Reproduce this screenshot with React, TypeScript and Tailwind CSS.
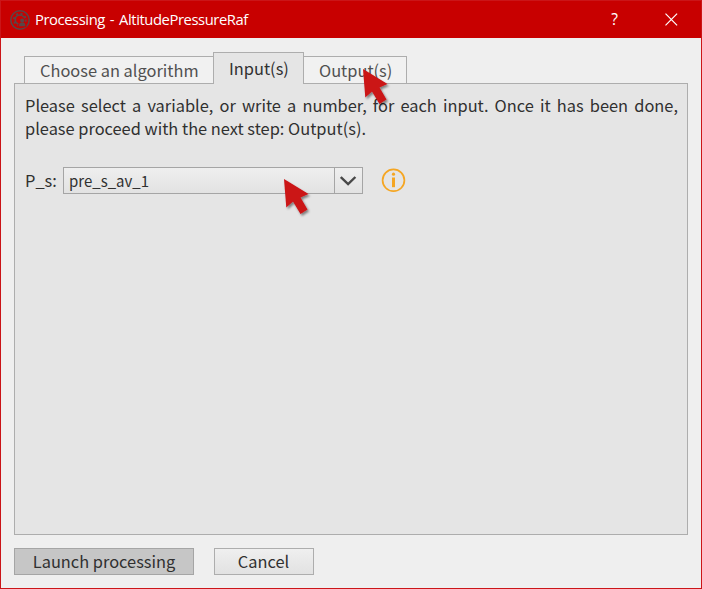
import type { ReactNode } from "react";

function Pointer({ className }: { className: string }) {
  return (
    <svg
      className={`pointer-events-none absolute h-[44px] w-[34px] ${className}`}
      viewBox="0 0 34 44"
    >
      <defs>
        <filter id="pointer-shadow" x="-30%" y="-30%" width="170%" height="170%">
          <feDropShadow dx="1.5" dy="2" stdDeviation="1.3" floodColor="#000" floodOpacity="0.45" />
        </filter>
      </defs>
      <path
        d="M4 4 28.5 19 20.5 22.5 27.5 34.5 20.5 39 13 26.5 6.3 32.5Z"
        fill="#cb1317"
        filter="url(#pointer-shadow)"
      />
    </svg>
  );
}

function AppIcon() {
  return (
    <svg className="size-5 shrink-0" viewBox="0 0 20 20" fill="none" stroke="#594646">
      <circle cx="10" cy="10" r="9.2" strokeWidth="1.5" />
      <circle cx="9.8" cy="9.6" r="4.6" strokeWidth="1.7" />
      <circle cx="9.8" cy="9.6" r="5.9" strokeWidth="1.8" strokeDasharray="2.1 2.534" />
      <path d="M8.2 17.2v-3.4l2-1.8a2.8 2.8 0 1 1 4.2 0l2 1.8v3.4Z" fill="#c80000" stroke="none" />
      <circle cx="12.2" cy="10.6" r="2" fill="#594646" stroke="none" />
      <path d="M9.2 16.3v-2.4l1.5-1.4h3l1.5 1.4v2.4Z" fill="#594646" stroke="none" />
    </svg>
  );
}

function Tab({ className, children }: { className: string; children: ReactNode }) {
  return (
    <button className={`border border-[#adadad] text-left whitespace-nowrap ${className}`}>
      {children}
    </button>
  );
}

export default function App() {
  return (
    <div className="relative flex h-[589px] w-[702px] flex-col overflow-hidden border border-[#cb1518] bg-[#efefef] font-['Noto_Sans_CJK_SC',sans-serif] text-[16.4px] leading-[23px] text-[#303030]">
      <header className="flex h-[37px] shrink-0 items-center bg-[#c80000] pl-[9px] font-['Open_Sans',sans-serif] text-white">
        <AppIcon />
        <span className="ml-[5px] text-[14.8px] tracking-[-0.43px] whitespace-nowrap [word-spacing:1.5px]">
          Processing - AltitudePressureRaf
        </span>
        <span className="mr-[47px] ml-auto text-[15.5px]">?</span>
        <svg className="mr-[23px] size-[13px]" viewBox="0 0 13 13" stroke="white" strokeWidth="1.2">
          <path d="M.5.7 12.1 12.3M12.1.7.5 12.3" />
        </svg>
      </header>

      <main className="flex flex-1 flex-col px-[13px] pt-[14px] pb-[13px]">
        <div className="relative z-10 -mb-px flex h-8 items-end pl-[10px]">
          <Tab className="h-7 w-[190px] bg-[#f1f1f1] pl-[15px] text-[#505050]">
            Choose an algorithm
          </Tab>
          <Tab className="-ml-px h-8 w-[91px] border-b-0 bg-[#e5e5e5] pl-[15px]">Input(s)</Tab>
          <Tab className="-ml-px h-7 w-[104px] bg-[#f1f1f1] pl-[15px] text-[#505050]">
            Output(s)
          </Tab>
        </div>

        <section className="h-[452px] w-[674px] shrink-0 border border-[#adadad] bg-[#e5e5e5] px-[10px] pt-[10px]">
          <p className="w-[653px] text-justify">
            Please select a variable, or write a number, for each input. Once it has been done,
            please proceed with the next step: Output(s).
          </p>
          <div className="mt-[27px] flex h-[27px] items-center">
            <span className="w-[38px]">P_s:</span>
            <div className="flex h-[27px] w-[300px] border border-[#a5a5a5] bg-linear-to-b from-[#efefef] to-[#e2e2e2]">
              <span className="flex flex-1 items-center border-r border-[#a5a5a5] pl-[5px] text-[15px]">
                pre_s_av_1
              </span>
              <span className="flex w-[27px] items-center justify-center pr-px">
                <svg className="h-[10px] w-[17px]" viewBox="0 0 17 10" fill="none">
                  <path d="m.8 1 7.3 7 7.3-7" stroke="#484848" strokeWidth="2.4" />
                </svg>
              </span>
            </div>
            <svg className="ml-[18px] size-[25px]" viewBox="0 0 25 25">
              <circle cx="12.5" cy="12.3" r="10.9" fill="none" stroke="#f5a623" strokeWidth="1.7" />
              <path d="M11 9.5h3v9.7h-3z" fill="#f5a623" />
              <circle cx="12.5" cy="6.2" r="1.6" fill="#f5a623" />
            </svg>
          </div>
        </section>

        <footer className="mt-[13px] flex h-[27px] gap-5">
          <button className="flex w-[180px] items-center justify-center border border-[#a5a5a5] bg-[#c6c6c6]">
            Launch processing
          </button>
          <button className="flex w-[100px] items-center justify-center border border-[#adadad] bg-linear-to-b from-[#efefef] to-[#e2e2e2] pr-px">
            Cancel
          </button>
        </footer>
      </main>

      <Pointer className="top-[64px] left-[358px] z-20" />
      <Pointer className="top-[174px] left-[279px] z-20" />
    </div>
  );
}
